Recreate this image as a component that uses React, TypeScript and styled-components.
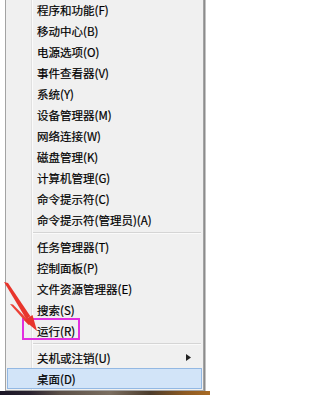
import styled, { createGlobalStyle } from "styled-components";

const GlobalStyle = createGlobalStyle`
	html, body {
		margin: 0;
		padding: 0;
		background: #ffffff;
	}
`;

const Screen = styled.div`
	position: relative;
	width: 220px;
	height: 399px;
	overflow: hidden;
	background: #ffffff;
	font-family: "Noto Sans CJK SC", "Microsoft YaHei", sans-serif;
`;

// Win8 style context menu with the icon gutter line
const Menu = styled.div`
	box-sizing: border-box;
	width: 199px;
	margin: -1px 0 0 5px;
	padding: 0 1px 1px 1px;
	display: flex;
	flex-direction: column;
	border: 1px solid #a3a3a3;
	border-top: none;
	background: linear-gradient(
		to right,
		#f0f0f0 25px,
		#e0e0e0 25px,
		#e0e0e0 26px,
		#fbfbfb 26px,
		#fbfbfb 27px,
		#f0f0f0 27px
	);
	box-shadow: 1px 0 0 #8c8c8c, 2px 1px 0 #c4c4c4;
`;

const Item = styled.div<{ $active?: boolean }>`
	box-sizing: border-box;
	height: 21px;
	display: flex;
	align-items: center;
	padding: 0 10px 0 29px;
	border: 1px solid ${(p) => (p.$active ? "#93b8e3" : "transparent")};
	background: ${(p) => (p.$active ? "#d2e4f8" : "transparent")};
	font-size: 11.5px;
	color: #000;
	-webkit-text-stroke: 0.2px #000;
	white-space: nowrap;
`;

const Label = styled.span`
	flex: 1;
`;

const Separator = styled.div`
	height: 6px;
	margin-left: 26px;
	margin-right: 1px;
	display: flex;
	flex-direction: column;
	justify-content: center;

	&::before {
		content: "";
		height: 1px;
		background: #d5d5d5;
	}
	&::after {
		content: "";
		height: 1px;
		background: #fafafa;
	}
`;

const Taskbar = styled.div`
	width: 210px;
	height: 4px;
	background: linear-gradient(
		to right,
		#1b1626 0px,
		#2a2330 30px,
		#5b5048 60px,
		#7b6e60 110px,
		#4c3c2c 150px,
		#8d5a22 185px,
		#a86a24 210px
	);
`;

const Highlight = styled.div`
	position: absolute;
	left: 22px;
	top: 318px;
	width: 58px;
	height: 22px;
	box-sizing: border-box;
	border: 2px solid #e22fe0;
`;

const ArrowLayer = styled.svg`
	position: absolute;
	left: 0;
	top: 0;
	pointer-events: none;
`;

const SubArrow = () => (
	<svg width="5" height="7" viewBox="0 0 5 7">
		<polygon points="0,0 5,3.5 0,7" fill="#222" />
	</svg>
);

type Entry = { label: string; sub?: boolean; active?: boolean } | "sep";

const entries: Entry[] = [
	{ label: "程序和功能(F)" },
	{ label: "移动中心(B)" },
	{ label: "电源选项(O)" },
	{ label: "事件查看器(V)" },
	{ label: "系统(Y)" },
	{ label: "设备管理器(M)" },
	{ label: "网络连接(W)" },
	{ label: "磁盘管理(K)" },
	{ label: "计算机管理(G)" },
	{ label: "命令提示符(C)" },
	{ label: "命令提示符(管理员)(A)" },
	"sep",
	{ label: "任务管理器(T)" },
	{ label: "控制面板(P)" },
	{ label: "文件资源管理器(E)" },
	{ label: "搜索(S)" },
	{ label: "运行(R)" },
	"sep",
	{ label: "关机或注销(U)", sub: true },
	{ label: "桌面(D)", active: true },
];

export default function App() {
	return (
		<Screen>
			<GlobalStyle />
			<Menu>
				{entries.map((e, i) =>
					e === "sep" ? (
						<Separator key={i} />
					) : (
						<Item key={i} $active={e.active}>
							<Label>{e.label}</Label>
							{e.sub && <SubArrow />}
						</Item>
					)
				)}
			</Menu>
			<Taskbar />
			<Highlight />
			<ArrowLayer width="220" height="399" viewBox="0 0 220 399">
				<polygon points="4,282 8,283 30.4,316.2 26.2,319" fill="#e8352c" />
				<polygon points="10,304 13,304.5 31,323 28.5,325" fill="#ec4036" />
				<polygon points="37,331 24.1,320.3 32.5,314.9" fill="#e8352c" />
			</ArrowLayer>
		</Screen>
	);
}
